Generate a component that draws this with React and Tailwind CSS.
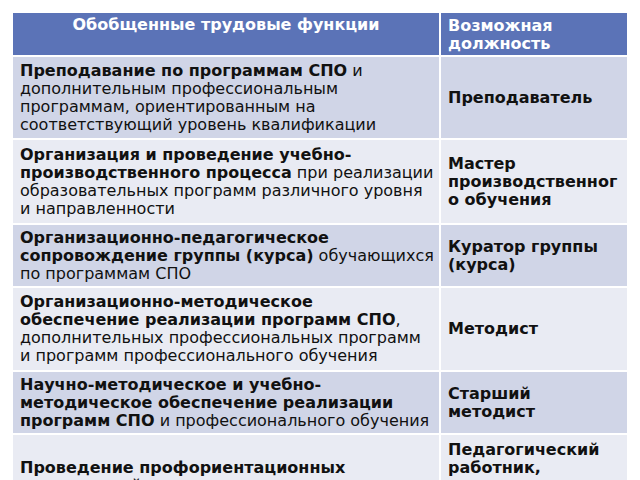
const rows = [
  {
    bg: "bg-[#d0d5e7]",
    h: "h-[81px]",
    left: [
      [["b", "Преподавание по программам СПО"], ["n", " и"]],
      [["n", "дополнительным профессиональным"]],
      [["n", "программам, ориентированным на"]],
      [["n", "соответствующий уровень квалификации"]],
    ],
    right: ["Преподаватель"],
  },
  {
    bg: "bg-[#e9ebf3]",
    h: "h-[83px]",
    left: [
      [["b", "Организация и проведение учебно-"]],
      [["b", "производственного процесса"], ["n", " при реализации"]],
      [["n", "образовательных программ различного уровня"]],
      [["n", "и направленности"]],
    ],
    right: ["Мастер", "производственног", "о обучения"],
  },
  {
    bg: "bg-[#d0d5e7]",
    h: "h-[61px]",
    left: [
      [["b", "Организационно-педагогическое"]],
      [["b", "сопровождение группы (курса)"], ["n", " обучающихся"]],
      [["n", "по программам СПО"]],
    ],
    right: ["Куратор группы", "(курса)"],
  },
  {
    bg: "bg-[#e9ebf3]",
    h: "h-[82px]",
    left: [
      [["b", "Организационно-методическое"]],
      [["b", "обеспечение реализации программ СПО"], ["n", ","]],
      [["n", "дополнительных профессиональных программ"]],
      [["n", "и программ профессионального обучения"]],
    ],
    right: ["Методист"],
  },
  {
    bg: "bg-[#d0d5e7]",
    h: "h-[61px]",
    left: [
      [["b", "Научно-методическое и учебно-"]],
      [["b", "методическое обеспечение реализации"]],
      [["b", "программ СПО"], ["n", " и профессионального обучения"]],
    ],
    right: ["Старший", "методист"],
  },
  {
    bg: "bg-[#e9ebf3]",
    h: "h-[84px]",
    left: [
      [["b", "Проведение профориентационных"]],
      [["b", "мероприятий"], ["n", " со школьниками"]],
    ],
    right: ["Педагогический", "работник,", "методист,", "куратор"],
  },
];

function Line({ parts }) {
  return (
    <div className="whitespace-nowrap">
      {parts.map(([k, t], i) =>
        k === "b" ? (
          <span key={i} className="font-bold">
            {t}
          </span>
        ) : (
          <span key={i}>{t}</span>
        )
      )}
    </div>
  );
}

export default function App() {
  return (
    <div className="w-[640px] h-[480px] overflow-hidden bg-white pt-[13px] pl-[13px] font-['DejaVu_Sans',sans-serif] text-[16px] leading-[18px] text-[#111111]">
      <div className="w-[614px] flex flex-col gap-[2px]">
        <div className="flex gap-[2px] h-[42px] text-white font-bold">
          <div className="w-[426px] bg-[#5b73b7] px-[7px] pt-[3px] text-center">
            Обобщенные трудовые функции
          </div>
          <div className="flex-1 bg-[#5b73b7] px-[7px] pt-[4px]">
            <div>Возможная</div>
            <div>должность</div>
          </div>
        </div>
        {rows.map((r, i) => (
          <div key={i} className={`flex gap-[2px] ${r.h}`}>
            <div className={`w-[426px] ${r.bg} px-[7px] flex flex-col justify-center`}>
              {r.left.map((l, j) => (
                <Line key={j} parts={l} />
              ))}
            </div>
            <div className={`flex-1 ${r.bg} px-[7px] flex flex-col justify-center font-bold`}>
              {r.right.map((t, j) => (
                <div key={j} className="whitespace-nowrap">
                  {t}
                </div>
              ))}
            </div>
          </div>
        ))}
      </div>
    </div>
  );
}
